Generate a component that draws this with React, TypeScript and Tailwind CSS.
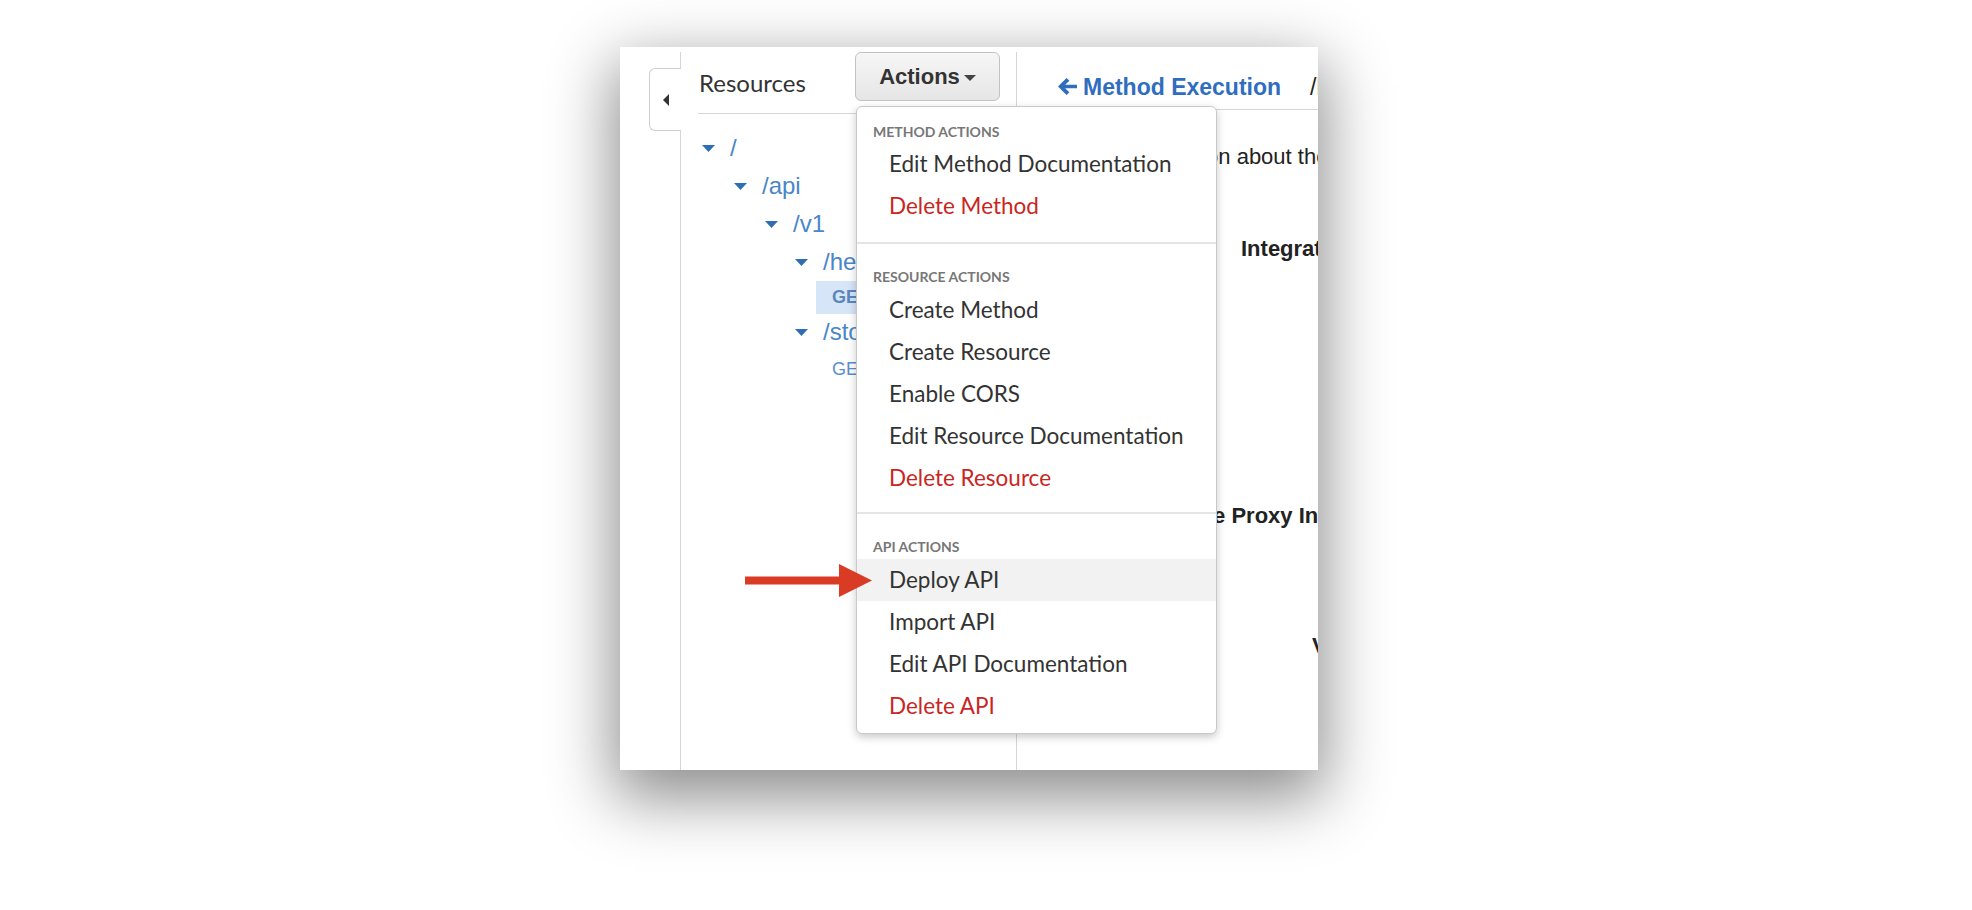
import React from 'react';

type MenuItem = { label: string; danger?: boolean; active?: boolean };
type Section = { title: string; head: string; foot: string; items: MenuItem[] };

const sections: Section[] = [
  {
    title: 'METHOD ACTIONS',
    head: 'pt-[17px] pb-[3px]',
    foot: 'pb-[15px]',
    items: [{ label: 'Edit Method Documentation' }, { label: 'Delete Method', danger: true }],
  },
  {
    title: 'RESOURCE ACTIONS',
    head: 'pt-[25px] pb-[4px]',
    foot: 'pb-[13px]',
    items: [
      { label: 'Create Method' },
      { label: 'Create Resource' },
      { label: 'Enable CORS' },
      { label: 'Edit Resource Documentation' },
      { label: 'Delete Resource', danger: true },
    ],
  },
  {
    title: 'API ACTIONS',
    head: 'pt-[25px] pb-[4px]',
    foot: 'pb-[6px]',
    items: [
      { label: 'Deploy API', active: true },
      { label: 'Import API' },
      { label: 'Edit API Documentation' },
      { label: 'Delete API', danger: true },
    ],
  },
];

const tree = [
  { label: '/', indent: 'pl-0' },
  { label: '/api', indent: 'pl-[32px]' },
  { label: '/v1', indent: 'pl-[63px]' },
  { label: '/hello', indent: 'pl-[93px]' },
];

function Caret() {
  return (
    <svg width="13" height="7" viewBox="0 0 13 7" className="shrink-0 text-[#2f6db5]">
      <polygon points="0,0 13,0 6.5,7" fill="currentColor" />
    </svg>
  );
}

function TreeRow({ label, indent }: { label: string; indent: string }) {
  return (
    <div className={`flex h-[38px] items-center ${indent}`}>
      <Caret />
      <span className="ml-[15px] text-[24px] leading-[28px] text-[#4a86c8]">{label}</span>
    </div>
  );
}

function ActionsMenu() {
  return (
    <div className="absolute left-px top-[54px] z-20 w-[361px] rounded-[6px] border border-[#c9c9c9] bg-white shadow-[0_3px_9px_rgba(0,0,0,0.22)] font-['Lato',sans-serif]">
      {sections.map((s, i) => (
        <div key={s.title}>
          {i > 0 && <div className="h-[2px] bg-[#e4e4e4]" />}
          <div className={s.foot}>
            <div className={`pl-[16px] text-[14px] font-bold leading-[16px] text-[#777] ${s.head}`}>{s.title}</div>
            {s.items.map((it) => (
              <div
                key={it.label}
                className={`flex h-[42px] items-center pl-[32px] text-[22.5px] ${it.active ? 'bg-[#f2f2f2]' : ''} ${
                  it.danger ? 'text-[#c9261f]' : 'text-[#333]'
                }`}
              >
                {it.label}
              </div>
            ))}
          </div>
        </div>
      ))}
    </div>
  );
}

export default function App() {
  return (
    <div className="min-h-[910px] bg-white pl-[620px] pt-[47px] font-['Liberation_Sans',Arial,sans-serif]">
      <div className="relative flex h-[723px] w-[698px] bg-white pt-[5px] shadow-[0_22px_60px_6px_rgba(0,0,0,0.45)]">
        {/* gutter with collapse tab */}
        <div className="flex w-[60px] shrink-0 flex-col">
          <div className="relative z-10 -mr-px ml-auto mt-[16px] flex h-[63px] w-[32px] items-center justify-center rounded-l-[6px] border border-r-0 border-[#cfcfcf] bg-white">
            <svg width="6" height="12" viewBox="0 0 6 12">
              <polygon points="6,0 6,12 0,6" fill="#333" />
            </svg>
          </div>
        </div>

        {/* resources panel */}
        <div className="flex w-[337px] shrink-0 flex-col border-x border-[#d6d6d6]">
          <div className="ml-[17px] mr-[16px] flex h-[62px] border-b border-[#d6d6d6]">
            <span className="pl-px pt-[17px] font-['Lato',sans-serif] text-[24px] leading-[28px] text-[#333]">Resources</span>
            <div className="relative ml-auto">
              <button className="flex h-[49px] w-[145px] items-center justify-center gap-[4px] rounded-[6px] border border-[#c2c2c2] bg-gradient-to-b from-[#f6f6f6] to-[#e6e6e6] text-[22px] font-bold text-[#333]">
                Actions
                <svg width="12" height="6" viewBox="0 0 12 6" className="mt-[3px]">
                  <polygon points="0,0 12,0 6,6" fill="#444" />
                </svg>
              </button>
              <ActionsMenu />
            </div>
          </div>

          <div className="pl-[21px] pt-[15px]">
            {tree.map((n) => (
              <TreeRow key={n.label} label={n.label} indent={n.indent} />
            ))}
            <div className="ml-[114px] flex h-[33px] items-center bg-[#d6e5f7] pl-[16px] text-[18px] font-bold text-[#5b87bd]">
              GET
            </div>
            <div className="flex h-[36px] items-center pl-[93px]">
              <Caret />
              <span className="ml-[15px] text-[24px] leading-[28px] text-[#4a86c8]">/store</span>
            </div>
            <div className="ml-[114px] flex h-[38px] items-center pl-[16px] text-[18px] text-[#5a8ed0]">GET</div>
          </div>
        </div>

        {/* method execution panel */}
        <div className="min-w-0 flex-1 overflow-hidden whitespace-nowrap">
          <div className="flex h-[58px] items-start border-b border-[#d6d6d6] pl-[41px] pt-[22px]">
            <svg width="19" height="19" viewBox="0 0 20 20" className="mt-[3px] shrink-0">
              <path d="M0 10 L9 1 L12 4 L7.5 8.2 H20 V11.8 H7.5 L12 16 L9 19 Z" fill="#2f6dbf" />
            </svg>
            <span className="ml-[6px] text-[23px] font-bold leading-[26px] text-[#2f6dbf]">Method Execution</span>
            <span className="ml-[29px] text-[23px] leading-[26px] text-[#222]">/hello - GET - Method Execution</span>
          </div>
          <div className="pl-[24px] pt-[34px] text-[22px] leading-[26px] text-[#222]">
            <p>Provide information about the method</p>
            <p className="ml-[200px] mt-[66px] font-bold">Integration Request</p>
            <p className="ml-[106px] mt-[241px] font-bold">Service Proxy Integration</p>
            <p className="ml-[271px] mt-[104px] font-bold">Value</p>
          </div>
        </div>

        {/* red annotation arrow */}
        <svg width="128" height="34" viewBox="0 0 128 34" className="absolute left-[125px] top-[517px] z-30">
          <rect x="0" y="12.5" width="96" height="8" fill="#d93b24" />
          <polygon points="94,0 127,16.5 94,33" fill="#d93b24" />
        </svg>
      </div>
    </div>
  );
}
